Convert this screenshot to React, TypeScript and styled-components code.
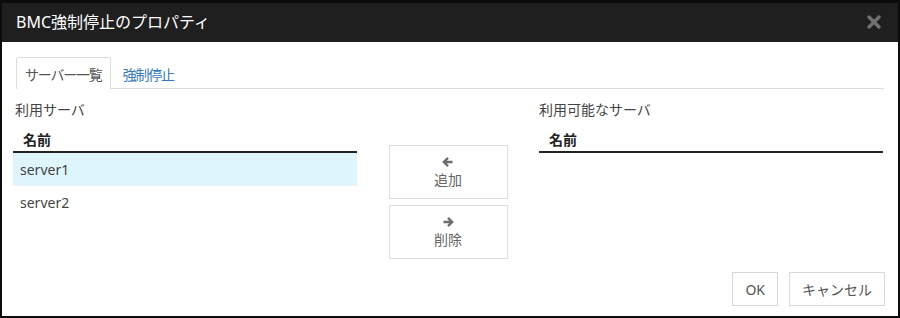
import React from "react";
import styled, { createGlobalStyle } from "styled-components";

const GlobalStyle = createGlobalStyle`
  html, body {
    margin: 0;
    padding: 0;
    background: #ffffff;
  }
  body {
    font-family: "Noto Sans", "Noto Sans CJK JP", sans-serif;
    color: #333333;
  }
`;

const FONT = `"Noto Sans", "Noto Sans CJK JP", sans-serif`;

const Dialog = styled.div`
  box-sizing: border-box;
  width: 900px;
  height: 318px;
  display: flex;
  flex-direction: column;
  border: 2px solid #0c0c0c;
  border-top-width: 3px;
  background: #ffffff;
  overflow: hidden;
`;

const Header = styled.div`
  height: 39px;
  flex: none;
  display: flex;
  align-items: center;
  justify-content: space-between;
  padding: 0 14px 0 14px;
  background: #1f1f1f;
`;

const Title = styled.div`
  font-family: ${FONT};
  font-size: 16px;
  color: #ffffff;
  line-height: 20px;
  margin-top: -1px;
`;

const CloseButton = styled.button`
  border: none;
  background: transparent;
  padding: 0;
  width: 16px;
  height: 16px;
  display: flex;
  align-items: center;
  justify-content: center;
  cursor: pointer;
  margin-right: 2px;
  margin-top: -2px;
`;

const Body = styled.div`
  flex: 1;
  display: flex;
  flex-direction: column;
  padding: 15px 15px 0 11px;
`;

const TabList = styled.div`
  display: flex;
  align-items: flex-start;
  margin: 0 -1px 0 3px;
  border-bottom: 1px solid #dddddd;
  height: 31px;
`;

const Tab = styled.div<{ $active?: boolean }>`
  box-sizing: border-box;
  height: 32px;
  padding: 0 8px;
  display: flex;
  align-items: center;
  font-family: ${FONT};
  font-size: 14px;
  letter-spacing: -1.2px;
  color: ${({ $active }) => ($active ? "#555555" : "#337ab7")};
  background: ${({ $active }) => ($active ? "#ffffff" : "transparent")};
  border: 1px solid ${({ $active }) => ($active ? "#dddddd" : "transparent")};
  border-bottom: none;
  border-radius: 2px 2px 0 0;
  margin-right: 3px;
`;

const Columns = styled.div`
  flex: 1;
  display: flex;
  padding-top: 11px;
`;

const Panel = styled.div`
  width: 344px;
  display: flex;
  flex-direction: column;
`;

const PanelLabel = styled.div<{ $indent?: number }>`
  font-family: ${FONT};
  font-size: 14px;
  line-height: 20px;
  color: #444444;
  padding-left: ${({ $indent }) => $indent ?? 0}px;
  margin-bottom: 7px;
`;

const TableHead = styled.div`
  height: 26px;
  box-sizing: border-box;
  display: flex;
  align-items: center;
  padding-left: 10px;
  font-family: ${FONT};
  font-size: 14px;
  font-weight: bold;
  color: #222222;
  border-bottom: 2px solid #222222;
`;

const Row = styled.div<{ $selected?: boolean }>`
  height: 33px;
  box-sizing: border-box;
  display: flex;
  align-items: center;
  padding-left: 7px;
  font-family: ${FONT};
  font-size: 14px;
  color: #444444;
  background: ${({ $selected }) => ($selected ? "#dff5fc" : "#ffffff")};
  border-bottom: 1px solid ${({ $selected }) => ($selected ? "#eef3f5" : "transparent")};
`;

const Middle = styled.div`
  flex: 1;
  display: flex;
  flex-direction: column;
  align-items: center;
  gap: 6px;
  padding-top: 45px;
`;

const MoveButton = styled.button`
  box-sizing: border-box;
  width: 119px;
  height: 54px;
  border: 1px solid #dddddd;
  background: #ffffff;
  display: flex;
  flex-direction: column;
  align-items: center;
  justify-content: center;
  gap: 2px;
  padding: 2px 0 0;
  font-family: ${FONT};
  font-size: 14px;
  line-height: 20px;
  color: #666666;
  cursor: pointer;
`;

const Footer = styled.div`
  flex: none;
  display: flex;
  justify-content: flex-end;
  gap: 11px;
  padding: 0 13px 10px 0;
`;

const FooterButton = styled.button`
  box-sizing: border-box;
  height: 34px;
  padding: 0 12px;
  border: 1px solid #d8d8d8;
  background: #ffffff;
  font-family: ${FONT};
  font-size: 14px;
  color: #555555;
  cursor: pointer;
`;

const Arrow = ({ dir }: { dir: "left" | "right" }) => (
  <svg width="12" height="12" viewBox="0 0 12 12" fill="none">
    {dir === "left" ? (
      <path d="M10.5 6H2M6 1.8L1.8 6L6 10.2" stroke="#6d6d6d" strokeWidth="2.4" />
    ) : (
      <path d="M1.5 6H10M6 1.8L10.2 6L6 10.2" stroke="#6d6d6d" strokeWidth="2.4" />
    )}
  </svg>
);

const CloseIcon = () => (
  <svg width="14" height="14" viewBox="0 0 14 14">
    <path d="M2 2L12 12M12 2L2 12" stroke="#707070" strokeWidth="3.4" strokeLinecap="round" />
  </svg>
);

export default function App() {
  const [selected, setSelected] = React.useState("server1");
  const servers = ["server1", "server2"];

  return (
    <>
      <GlobalStyle />
      <Dialog>
        <Header>
          <Title>BMC強制停止のプロパティ</Title>
          <CloseButton aria-label="close">
            <CloseIcon />
          </CloseButton>
        </Header>
        <Body>
          <TabList>
            <Tab $active>サーバー一覧</Tab>
            <Tab>強制停止</Tab>
          </TabList>
          <Columns>
            <Panel>
              <PanelLabel $indent={2}>利用サーバ</PanelLabel>
              <TableHead>名前</TableHead>
              {servers.map((s) => (
                <Row key={s} $selected={selected === s} onClick={() => setSelected(s)}>
                  {s}
                </Row>
              ))}
            </Panel>
            <Middle>
              <MoveButton>
                <Arrow dir="left" />
                追加
              </MoveButton>
              <MoveButton>
                <Arrow dir="right" />
                削除
              </MoveButton>
            </Middle>
            <Panel>
              <PanelLabel>利用可能なサーバ</PanelLabel>
              <TableHead>名前</TableHead>
            </Panel>
          </Columns>
        </Body>
        <Footer>
          <FooterButton>OK</FooterButton>
          <FooterButton>キャンセル</FooterButton>
        </Footer>
      </Dialog>
    </>
  );
}
